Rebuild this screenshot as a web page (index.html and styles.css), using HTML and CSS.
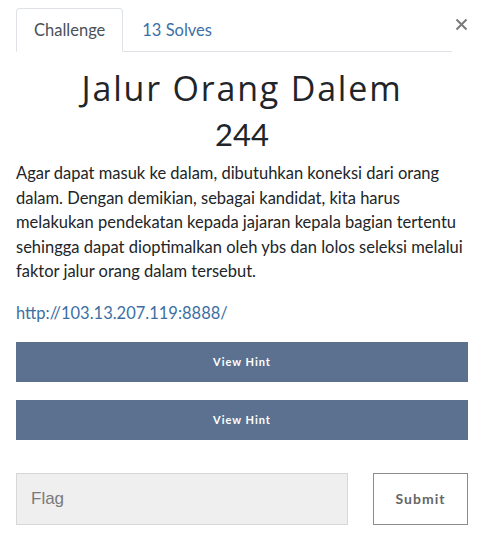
FILE: index.html
```html
<!DOCTYPE html>
<html lang="id">
<head>
<meta charset="utf-8">
<title>Jalur Orang Dalem</title>
<link rel="stylesheet" href="styles.css">
</head>
<body>
<div class="modal">
  <div class="modal-header">
    <ul class="tabs">
      <li class="tab active">Challenge</li>
      <li class="tab link">13 Solves</li>
    </ul>
    <button class="close" aria-label="Close">
      <svg width="13" height="13" viewBox="0 0 13 13"><path d="M1.5 1.5 L11.5 11.5 M11.5 1.5 L1.5 11.5" stroke="#7a7a7a" stroke-width="2" stroke-linecap="butt"/></svg>
    </button>
  </div>
  <h2 class="title">Jalur Orang Dalem</h2>
  <h3 class="value">244</h3>
  <p class="desc">Agar dapat masuk ke dalam, dibutuhkan koneksi dari orang dalam. Dengan demikian, sebagai kandidat, kita harus melakukan pendekatan kepada jajaran kepala bagian tertentu sehingga dapat dioptimalkan oleh ybs dan lolos seleksi melalui faktor jalur orang dalam tersebut.</p>
  <p class="url"><a href="#">http://103.13.207.119:8888/</a></p>
  <div class="hints">
    <button class="hint">View Hint</button>
    <button class="hint">View Hint</button>
  </div>
  <form class="submit-row">
    <input class="flag" type="text" placeholder="Flag">
    <button class="submit" type="button">Submit</button>
  </form>
</div>
</body>
</html>
```

FILE: styles.css
```css
* { box-sizing: border-box; }
html, body { margin: 0; background: #fff; }
body {
  font-family: Lato, "Noto Sans", sans-serif;
  color: #212529;
}
.modal {
  width: 488px;
  padding: 8px 20px 0 16px;
}
.modal-header {
  display: flex;
  align-items: flex-start;
}
.tabs {
  flex: 1;
  display: flex;
  list-style: none;
  margin: 0;
  padding: 0;
  border-bottom: 1px solid #dee2e6;
  margin-right: 2px;
}
.tab {
  font-size: 16.5px;
  line-height: 24px;
  padding: 9px 17px 9px 17px;
  border: 1px solid transparent;
  border-top-left-radius: 4px;
  border-top-right-radius: 4px;
  margin-bottom: -1px;
}
.tab.active {
  color: #495057;
  border-color: #dee2e6 #dee2e6 #fff;
  background: #fff;
}
.tab.link { color: #3d6fa5; padding-left: 18px; }
.close {
  background: none;
  border: 0;
  padding: 0;
  margin-top: 9px;
  width: 14px;
  height: 14px;
  display: flex;
  align-items: center;
  justify-content: center;
}
.title {
  font-family: "Open Sans", Lato, sans-serif;
  font-weight: 400;
  font-size: 34px;
  letter-spacing: 1.8px;
  line-height: 40px;
  text-align: center;
  margin: 16px 0 0;
  color: #212529;
}
.value {
  font-weight: 400;
  font-size: 31px;
  line-height: 38px;
  text-align: center;
  margin: 7px 0 0;
  color: #212529;
}
.desc {
  font-size: 16.5px;
  line-height: 24.5px;
  margin: 8px 0 0;
}
.url {
  font-size: 16.5px;
  line-height: 25px;
  margin: 17px 0 0;
}
.url a { color: #3d6fa5; text-decoration: none; }
.hints {
  display: flex;
  flex-direction: column;
  gap: 18px;
  margin-top: 16px;
}
.hint {
  height: 40px;
  width: 100%;
  border: 0;
  background: #5c718f;
  color: #fff;
  font-family: Lato, sans-serif;
  font-weight: 700;
  font-size: 11px;
  letter-spacing: 1px;
}
.submit-row {
  display: flex;
  gap: 25px;
  margin-top: 33px;
}
.flag {
  flex: 1;
  height: 52px;
  background: #efefef;
  border: 1px solid #d7d7d7;
  padding: 0 14px;
  font-family: "Liberation Sans", Arial, sans-serif;
  font-size: 17px;
  color: #555;
}
.flag::placeholder { color: #7a7a7a; }
.submit {
  width: 95px;
  height: 52px;
  background: #fff;
  border: 1px solid #8c8c8c;
  color: #666;
  font-family: Lato, sans-serif;
  font-weight: 700;
  font-size: 14px;
  letter-spacing: 1px;
}
```
